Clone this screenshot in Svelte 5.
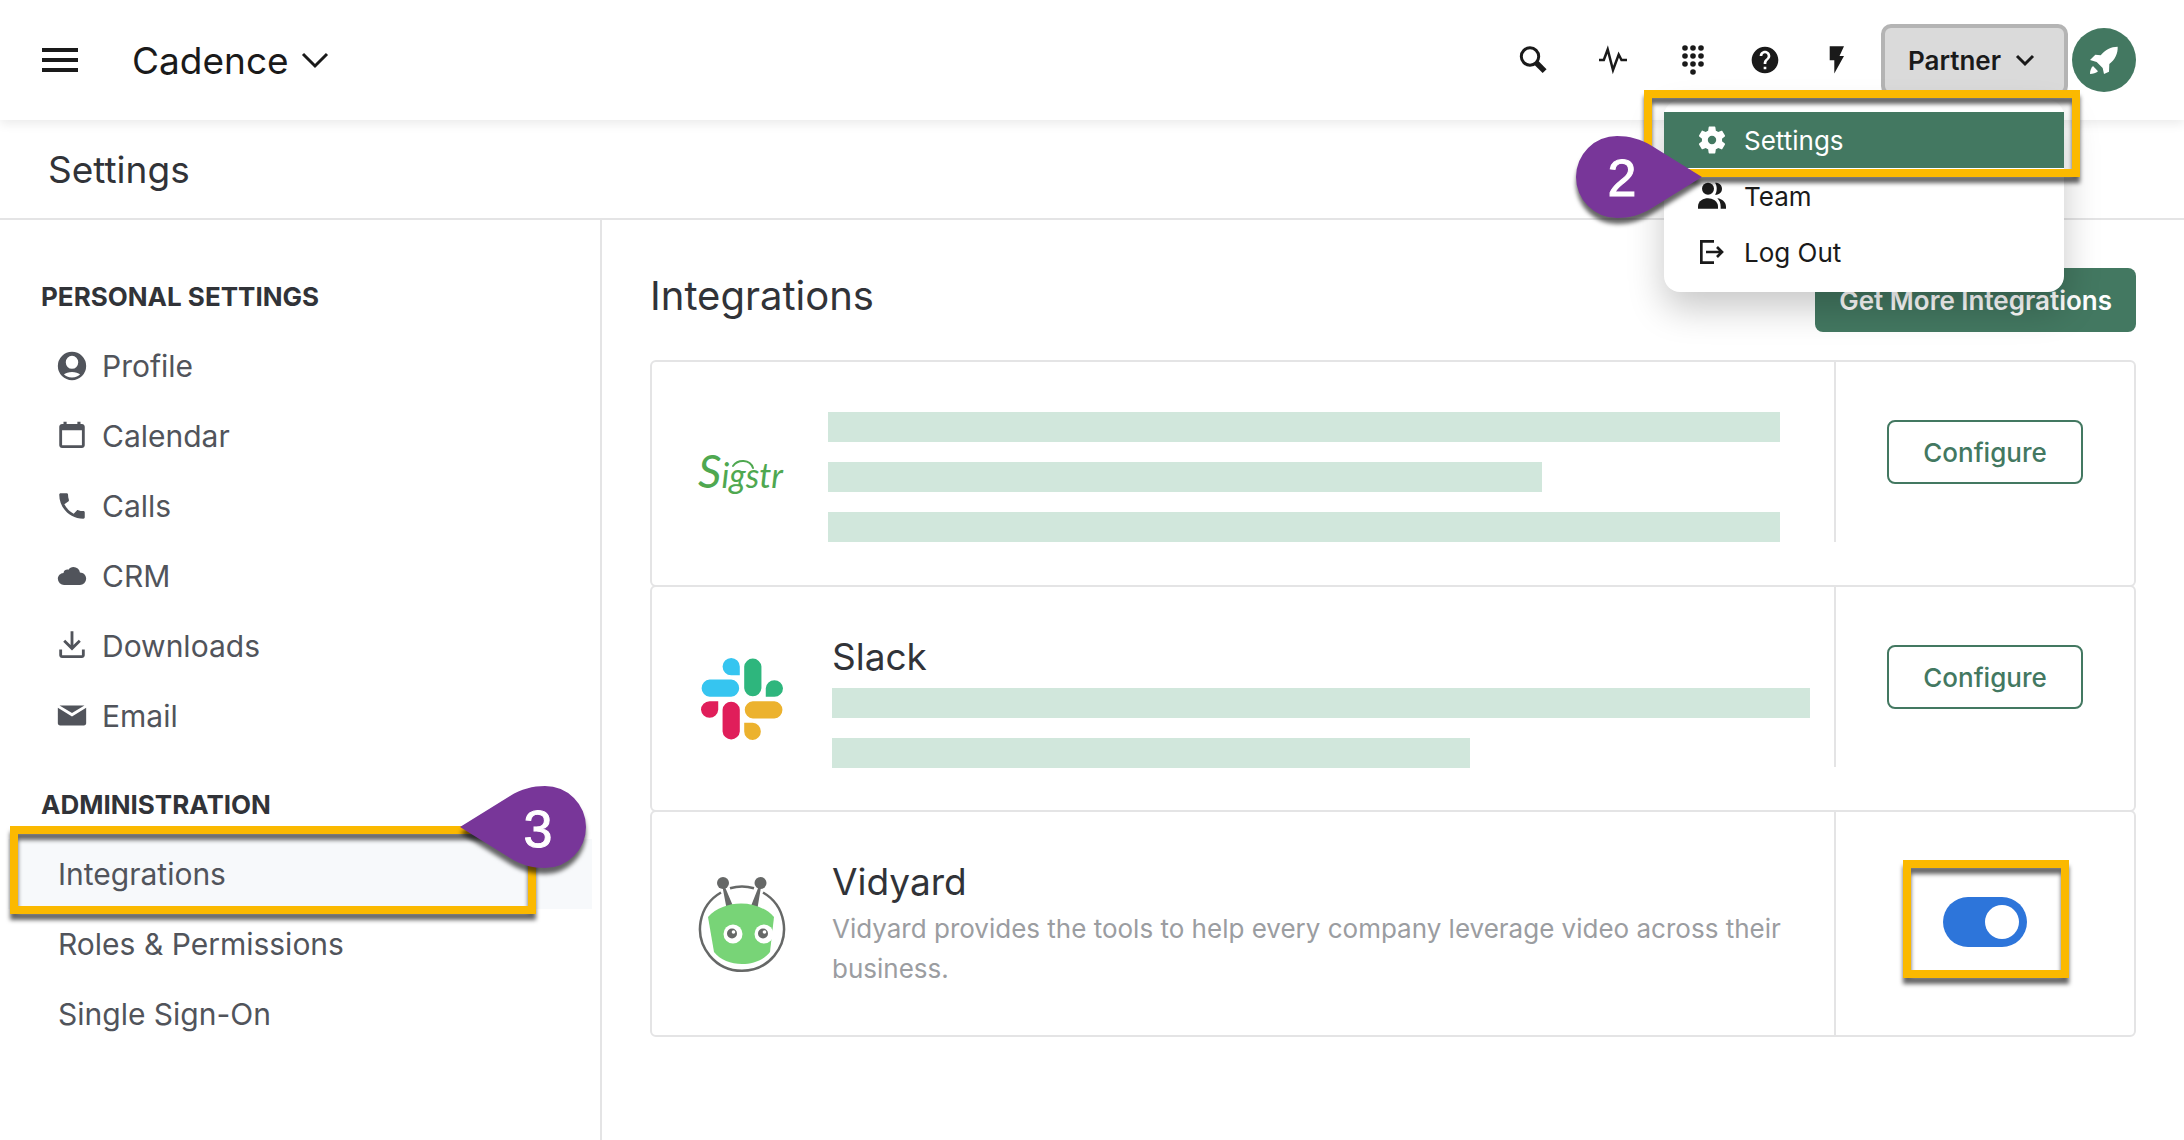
<script lang="ts">
  interface NavItem {
    label: string;
    icon: string;
  }

  interface Integration {
    id: string;
    name: string | null;
    description?: string;
    bars: number[];
    action: "configure" | "toggle";
  }

  const personalItems: NavItem[] = [
    {
      label: "Profile",
      icon: "M12 2a10 10 0 1 0 0 20a10 10 0 0 0 0-20zM12 4.800a4.400 4.600 0 1 1 0 9.200a4.400 4.600 0 0 1 0-9.200zM12 20.200c-2.600 0-4.700-1-5.700-2.300c1.200-1 3.300-1.700 5.700-1.700s4.500.7 5.700 1.700c-1 1.300-3.100 2.300-5.700 2.300z",
    },
    {
      label: "Calendar",
      icon: "M19 3.500h-1V2h-2.200v1.500H8.200V2H6v1.500H5c-1.100 0-2 .9-2 2v13c0 1.100.9 2 2 2h14c1.100 0 2-.9 2-2v-13c0-1.100-.9-2-2-2zm0 15H5V8h14z",
    },
    {
      label: "Calls",
      icon: "M6.600 10.800c1.400 2.800 3.800 5.100 6.600 6.600l2.200-2.200c.3-.3.700-.4 1-.2 1.100.4 2.300.6 3.600.6.600 0 1 .4 1 1V20c0 .6-.4 1-1 1C10.600 21 3 13.400 3 4c0-.6.400-1 1-1h4.200c.6 0 1 .4 1 1 0 1.200.2 2.400.6 3.600.1.300 0 .7-.2 1z",
    },
    {
      label: "CRM",
      icon: "M6.500 18.300A4.400 4.400 0 0 1 2 14c0-2.300 1.700-4 4-4.200C6.300 8 8 7.200 9.500 7.600C10.300 6.300 11.500 5.600 13 5.600A4.600 4.600 0 0 1 17.600 9.600C20.100 9.700 22 11.500 22 14a4.400 4.400 0 0 1-4.500 4.300z",
    },
    {
      label: "Downloads",
      icon: "M3 14.500h2v4h14v-4h2v4c0 1.100-.9 2-2 2H5c-1.100 0-2-.9-2-2zM11 1.500h2v9.800l3.800-3.800L18.200 9 12 15.200 5.800 9l1.400-1.500L11 11.300z",
    },
    {
      label: "Email",
      icon: "M3.200 4.500h17.600L12 9.900zM2 6.100l10 6.200 10-6.200V17.100c0 .9-.7 1.600-1.600 1.600H3.600c-.9 0-1.600-.7-1.600-1.600z",
    },
  ];

  const adminItems = ["Integrations", "Roles & Permissions", "Single Sign-On"];

  const integrations: Integration[] = [
    { id: "sigstr", name: null, bars: [94.6, 71, 94.6], action: "configure" },
    { id: "slack", name: "Slack", bars: [97.6, 63.7], action: "configure" },
    {
      id: "vidyard",
      name: "Vidyard",
      description: "Vidyard provides the tools to help every company leverage video across their business.",
      bars: [],
      action: "toggle",
    },
  ];

  let activeItem = "Integrations";
  let vidyardEnabled = true;
</script>

<header class="topbar">
  <button class="menu-button" aria-label="Menu"><span></span><span></span><span></span></button>
  <button class="brand">
    Cadence
    <svg width="28" height="16" viewBox="0 0 28 16"><path d="M2 2l12 12L26 2" /></svg>
  </button>

  <div class="tools">
    <button class="tool" aria-label="Search">
      <svg viewBox="0 0 28 28">
        <circle class="line" cx="11" cy="10.500" r="8.700" stroke-width="3" />
        <path class="line" d="M17 16.500l8.600 8.600" stroke-width="5.500" />
      </svg>
    </button>
    <button class="tool" aria-label="Activity">
      <svg viewBox="0 0 28 28">
        <path class="line" d="M0 14h4.800L8.700 3.500 14 24l5.700-15.500 2.800 5.500H28" stroke-width="2.500" />
      </svg>
    </button>
    <button class="tool" aria-label="Dialer">
      <svg viewBox="0 0 28 28">
        {#each [2, 10, 18] as y}
          {#each [6, 14, 22] as x}
            <circle cx={x} cy={y} r="2.800" />
          {/each}
        {/each}
        <circle cx="14" cy="26" r="2.800" />
      </svg>
    </button>
    <div class="tools-near">
      <button class="tool" aria-label="Help">
        <svg viewBox="1.500 1.500 21 21">
          <path
            d="M12 2C6.480 2 2 6.480 2 12s4.480 10 10 10 10-4.480 10-10S17.520 2 12 2zm1 17h-2v-2h2v2zm2.070-7.750l-.9.920C13.450 12.900 13 13.500 13 15h-2v-.5c0-1.100.450-2.100 1.170-2.830l1.240-1.260c.370-.360.590-.860.590-1.410 0-1.100-.9-2-2-2s-2 .9-2 2H8c0-2.210 1.790-4 4-4s4 1.790 4 4c0 .880-.360 1.680-.930 2.250z"
          />
        </svg>
      </button>
      <button class="tool" aria-label="Quick actions">
        <svg viewBox="0 0 28 28"><path d="M6.700.300H21L16.500 10H21L11.300 27.500V14.300H6.700z" /></svg>
      </button>
    </div>
  </div>

  <div class="account">
    <button class="partner">
      Partner
      <svg width="20" height="12" viewBox="0 0 20 12"><path d="M2 2l8 8 8-8" /></svg>
    </button>

    <div class="dropdown">
      <a class="dropdown-item selected" href="#settings">
        <svg width="28" height="28" viewBox="2 2 20 20" fill-rule="evenodd">
          <path
            d="M19.140 12.940c.040-.3.060-.610.060-.940 0-.320-.020-.640-.070-.940l2.030-1.580c.180-.140.230-.410.120-.610l-1.920-3.320c-.120-.220-.370-.290-.590-.220l-2.390.960c-.5-.380-1.030-.7-1.620-.940l-.360-2.540c-.040-.240-.240-.410-.480-.410h-3.840c-.240 0-.430.170-.470.410l-.360 2.540c-.590.240-1.130.570-1.620.940l-2.390-.960c-.220-.080-.470 0-.590.220L2.740 8.870c-.120.210-.080.470.120.610l2.030 1.580c-.050.3-.090.630-.090.940s.020.640.070.940l-2.030 1.580c-.180.140-.230.410-.120.610l1.920 3.320c.120.220.370.290.590.220l2.390-.960c.5.380 1.030.7 1.620.940l.360 2.540c.050.240.240.410.480.410h3.840c.240 0 .440-.170.470-.410l.360-2.540c.590-.240 1.130-.560 1.620-.940l2.390.960c.220.080.470 0 .590-.220l1.920-3.320c.120-.220.070-.470-.120-.610l-2.010-1.580zM12 9a3 3 0 1 0 0 6a3 3 0 0 0 0-6z"
          />
        </svg>
        Settings
        <span class="highlight"></span>
        <svg class="marker" width="126" height="82" viewBox="0 0 126 82">
          <path d="M126 41L76 10C65 3 53 0 41 0a41 41 0 0 0 0 82c12 0 24-3 35-10z" />
          <text x="46" y="60">2</text>
        </svg>
      </a>
      <a class="dropdown-item" href="#team">
        <svg width="28" height="28" viewBox="0 0 84 84">
          <circle cx="30" cy="20" r="18" />
          <path d="M0 80v-6c0-18 17-25 30-25s30 8 30 25v6z" />
          <path d="M51 2c12-1 21 7 21 18s-9 19-21 18c7-9 7-27 0-36z" />
          <path d="M58 49c15 2 26 12 26 25v6H68v-6c0-11-4-19-10-25z" />
        </svg>
        Team
      </a>
      <a class="dropdown-item" href="#logout">
        <svg width="28" height="28" viewBox="0 0 84 84">
          <path class="line" d="M48 10H10v64h38M24 42h48M57 27l15 15-15 15" stroke-width="8" />
        </svg>
        Log Out
      </a>
    </div>
  </div>

  <button class="avatar" aria-label="Launch">
    <svg viewBox="0 0 192 192">
      <path d="M137 56c-20 0-38 9-51 26l-16-2-16 16 20 6 18 18 4 18 15-7 1-23c17-14 26-31 25-52z" />
      <path d="M63 114c-6 6-9 14-9 24 9 0 18-2 24-8z" />
    </svg>
  </button>
</header>

<div class="page-title"><h1>Settings</h1></div>

<div class="layout">
  <nav class="sidebar">
    <h2>Personal Settings</h2>
    <ul>
      {#each personalItems as item}
        <li>
          <a class="nav-link with-icon" href="#{item.label.toLowerCase()}">
            <svg width="34" height="34" viewBox="0 0 24 24" fill-rule="evenodd"><path d={item.icon} /></svg>
            {item.label}
          </a>
        </li>
      {/each}
    </ul>

    <h2>Administration</h2>
    <ul>
      {#each adminItems as label}
        <li>
          <a class="nav-link" class:active={label === activeItem} href="#admin">
            {label}
            {#if label === activeItem}
              <span class="highlight"></span>
              <svg class="marker" width="126" height="82" viewBox="0 0 126 82">
                <path d="M0 41l50-31C61 3 73 0 85 0a41 41 0 0 1 0 82c-12 0-24-3-35-10z" />
                <text x="78" y="61">3</text>
              </svg>
            {/if}
          </a>
        </li>
      {/each}
    </ul>
  </nav>

  <main class="content">
    <div class="content-header">
      <h2>Integrations</h2>
      <button class="btn btn-primary">Get More Integrations</button>
    </div>

    {#each integrations as item}
      <section class="row">
        <div class="logo">
          {#if item.id === "sigstr"}
            <svg class="sigstr" width="88" height="60" viewBox="0 0 88 60">
              <text x="0" y="44"><tspan class="initial">S</tspan>igstr</text>
              <path d="M35 22c5-7 17-7 20 2" />
            </svg>
          {:else if item.id === "slack"}
            <svg width="82" height="82" viewBox="0 0 24 24">
              <path
                fill="#36c5f0"
                d="M8.834 5.042a2.528 2.528 0 0 1-2.521-2.520A2.528 2.528 0 0 1 8.834 0a2.528 2.528 0 0 1 2.521 2.522v2.520zM8.834 6.313a2.528 2.528 0 0 1 0 5.042H2.522a2.528 2.528 0 0 1 0-5.042z"
              />
              <path
                fill="#2eb67d"
                d="M18.956 8.834a2.528 2.528 0 0 1 5.044 0 2.528 2.528 0 0 1-2.522 2.521h-2.522zM17.688 8.834a2.528 2.528 0 0 1-5.043 0V2.522a2.528 2.528 0 0 1 5.043 0z"
              />
              <path
                fill="#e01e5a"
                d="M5.042 15.165a2.528 2.528 0 0 1-5.042 0 2.527 2.527 0 0 1 2.522-2.520h2.520zM6.313 15.165a2.527 2.527 0 0 1 5.042 0v6.313a2.528 2.528 0 0 1-5.042 0z"
              />
              <path
                fill="#ecb22e"
                d="M15.165 18.956a2.528 2.528 0 0 1 0 5.044 2.527 2.527 0 0 1-2.520-2.522v-2.522zM15.165 17.688a2.527 2.527 0 0 1 0-5.043h6.313a2.527 2.527 0 0 1 0 5.043z"
              />
            </svg>
          {:else}
            <svg width="88" height="98" viewBox="0 0 88 98">
              <g fill="none" stroke="#666867" stroke-width="2.500">
                <path d="M23 17.500a42 42 0 1 0 42 0" />
                <path d="M32 13.200a42 42 0 0 1 24 0" />
              </g>
              <g fill="#666867">
                <circle cx="25" cy="8" r="6" />
                <circle cx="62.500" cy="8" r="6" />
                <path d="M24.500 12h2.500L35 31l-6.500 2zM63 12h-2.500L53 31l6.500 2z" />
              </g>
              <path fill="#78d477" d="M10 42C26 24 60 24 76 42l-4 35C60 93 28 93 16 77z" />
              <circle cx="35" cy="59" r="9.500" fill="#fff" />
              <circle cx="66" cy="59" r="9.500" fill="#fff" />
              <circle cx="34" cy="58.500" r="5" fill="#666867" />
              <circle cx="65" cy="58.500" r="5" fill="#666867" />
              <circle cx="35.500" cy="57" r="1.800" fill="#fff" />
              <circle cx="66.500" cy="57" r="1.800" fill="#fff" />
            </svg>
          {/if}
        </div>

        <div class="details" class:titled={item.name}>
          {#if item.name}
            <h3>{item.name}</h3>
          {/if}
          {#if item.description}
            <p>{item.description}</p>
          {:else}
            <div class="bars">
              {#each item.bars as width}
                <div class="bar" style="width: {width}%"></div>
              {/each}
            </div>
          {/if}
        </div>

        {#if item.action === "toggle"}
          <div class="action action-toggle">
            <label class="toggle">
              <input type="checkbox" aria-label="Enable Vidyard" bind:checked={vidyardEnabled} />
              <span class="highlight"></span>
            </label>
          </div>
        {:else}
          <div class="action">
            <button class="btn btn-outline">Configure</button>
          </div>
        {/if}
      </section>
    {/each}
  </main>
</div>

<style>
  :global(body) {
    background: #fff;
    color: #313338;
    font-family: Inter, "Liberation Sans", sans-serif;
    font-size: 26px;
  }

  :global(#app) {
    display: flex;
    flex-direction: column;
    min-height: 100vh;
  }

  button {
    padding: 0;
    border: 0;
    background: none;
    color: inherit;
    font: inherit;
    cursor: pointer;
  }

  a {
    color: inherit;
    text-decoration: none;
  }

  h1,
  h2,
  h3,
  p,
  ul {
    margin: 0;
    padding: 0;
    font-weight: 400;
    list-style: none;
  }

  svg {
    display: block;
    flex: none;
    overflow: visible;
    fill: currentColor;
  }

  .line {
    fill: none;
    stroke: currentColor;
  }

  .topbar {
    position: relative;
    z-index: 2;
    display: flex;
    align-items: center;
    height: 120px;
    padding: 0 48px 0 42px;
    box-sizing: border-box;
    background: #fff;
    box-shadow: 0 4px 10px rgba(0, 0, 0, 0.08);
    color: #1a1a1a;
  }

  .menu-button {
    display: flex;
    flex-direction: column;
    gap: 6px;
    width: 36px;
    margin-right: 54px;
  }

  .menu-button span {
    height: 4px;
    background: #1a1a1a;
  }

  .brand {
    display: flex;
    align-items: center;
    gap: 12px;
    font-size: 37px;
  }

  .brand path,
  .partner path {
    fill: none;
    stroke: currentColor;
    stroke-width: 3;
  }

  .tools {
    display: flex;
    gap: 44px;
    margin: 0 26px 0 auto;
  }

  .tools-near {
    display: flex;
    gap: 36px;
    margin-left: -8px;
  }

  .tool {
    display: flex;
    justify-content: center;
    width: 36px;
  }

  .tool svg {
    width: 28px;
    height: 28px;
  }

  .account {
    position: relative;
    margin-right: 4px;
  }

  .partner {
    display: flex;
    align-items: center;
    gap: 14px;
    width: 187px;
    height: 72px;
    padding-left: 23px;
    border: 4px solid #b4b4b4;
    border-radius: 10px;
    background: #dadada;
    font-weight: 600;
  }

  .avatar {
    width: 64px;
    height: 64px;
    border-radius: 50%;
    background: #437861;
    color: #fff;
  }

  .dropdown {
    position: absolute;
    top: 76px;
    right: 4px;
    width: 400px;
    padding: 12px 0;
    box-sizing: border-box;
    border-radius: 16px;
    background: #fff;
    box-shadow: 0 16px 36px rgba(0, 0, 0, 0.22);
  }

  .dropdown-item {
    position: relative;
    display: flex;
    align-items: center;
    gap: 18px;
    height: 56px;
    padding-left: 34px;
  }

  .dropdown-item.selected {
    z-index: 1;
    background: #437861;
    color: #fff;
  }

  /* callouts */
  .highlight {
    position: absolute;
    border: 8px solid #fbb900;
    filter: drop-shadow(0 6px 2px rgba(0, 0, 0, 0.6));
    pointer-events: none;
  }

  .dropdown-item .highlight {
    inset: -22px -16px -9px -20px;
  }

  .nav-link .highlight {
    inset: -13px 56px -5px 2px;
  }

  .toggle .highlight {
    inset: -37px -42px -31px -40px;
  }

  .marker {
    position: absolute;
    fill: #783699;
    filter: drop-shadow(0 6px 2px rgba(0, 0, 0, 0.6));
  }

  .marker text {
    fill: #fff;
    font-family: "Liberation Sans", Arial, sans-serif;
    font-size: 52px;
    text-anchor: middle;
    stroke: #fff;
    stroke-width: 1;
  }

  .dropdown-item .marker {
    top: 24px;
    left: -88px;
  }

  .nav-link .marker {
    top: -53px;
    right: 6px;
  }

  .page-title {
    height: 100px;
    padding: 0 48px;
    box-sizing: border-box;
    border-bottom: 2px solid #e4e4e5;
  }

  .page-title h1 {
    font-size: 37px;
    line-height: 100px;
  }

  .layout {
    display: flex;
    flex: 1;
  }

  .sidebar {
    width: 600px;
    padding-top: 57px;
    flex: none;
    border-right: 2px solid #e4e4e5;
  }

  .sidebar h2 {
    margin-bottom: 14px;
    padding-left: 41px;
    font-size: 26px;
    font-weight: 700;
    line-height: 40px;
    text-transform: uppercase;
  }

  .sidebar ul + h2 {
    margin-top: 34px;
  }

  .nav-link {
    position: relative;
    display: flex;
    align-items: center;
    height: 70px;
    margin: 0 8px;
    padding-left: 50px;
    color: #51545b;
    font-size: 30px;
  }

  .nav-link.with-icon {
    gap: 13px;
    padding-left: 47px;
  }

  .nav-link.active {
    z-index: 1;
    background: #f7f9fb;
  }

  .content {
    flex: 1;
    padding: 48px;
  }

  .content-header {
    display: flex;
    align-items: flex-start;
    justify-content: space-between;
    margin-bottom: 30px;
  }

  .content-header h2 {
    font-size: 40px;
    line-height: 56px;
  }

  .btn {
    height: 64px;
    border-radius: 8px;
    font-weight: 500;
  }

  .btn-primary {
    padding: 0 24px;
    background: #437861;
    color: #fff;
    font-weight: 600;
  }

  .btn-outline {
    width: 196px;
    border: 2px solid #437861;
    background: #fff;
    color: #437861;
  }

  .row {
    display: flex;
    min-height: 227px;
    margin-top: -2px;
    box-sizing: border-box;
    border: 2px solid #e4e4e5;
    border-radius: 6px;
  }

  .logo {
    display: flex;
    align-items: center;
    justify-content: center;
    width: 176px;
    padding-left: 4px;
    box-sizing: border-box;
    flex: none;
  }

  .sigstr {
    fill: #4fa850;
  }

  .sigstr text {
    font-family: Lato, sans-serif;
    font-size: 34px;
    font-style: italic;
  }

  .sigstr .initial {
    font-size: 46px;
  }

  .sigstr path {
    fill: none;
    stroke: #4fa850;
    stroke-width: 2;
    stroke-linecap: round;
  }

  .details {
    flex: 1;
    padding-top: 50px;
  }

  .details.titled {
    padding: 48px 0 0 4px;
  }

  .details h3 {
    font-size: 37px;
    line-height: 44px;
  }

  .details p {
    margin-top: 5px;
    color: #9b9da1;
    line-height: 40px;
  }

  .bars {
    display: flex;
    flex-direction: column;
    gap: 20px;
  }

  h3 + .bars {
    margin-top: 9px;
  }

  .bar {
    height: 30px;
    background: #d1e7dc;
  }

  .action {
    display: flex;
    justify-content: center;
    width: 300px;
    height: 180px;
    padding-top: 58px;
    box-sizing: border-box;
    border-left: 2px solid #e4e4e5;
  }

  .action-toggle {
    align-items: center;
    height: auto;
    padding: 0 0 4px;
  }

  .toggle {
    position: relative;
    display: flex;
  }

  .toggle input {
    display: flex;
    align-items: center;
    width: 84px;
    height: 50px;
    margin: 0;
    padding: 0 8px;
    box-sizing: border-box;
    appearance: none;
    border-radius: 25px;
    background: #b8bbc0;
  }

  .toggle input::before {
    content: "";
    width: 34px;
    height: 34px;
    border-radius: 50%;
    background: #fff;
  }

  .toggle input:checked {
    justify-content: flex-end;
    background: #2d75da;
  }
</style>
